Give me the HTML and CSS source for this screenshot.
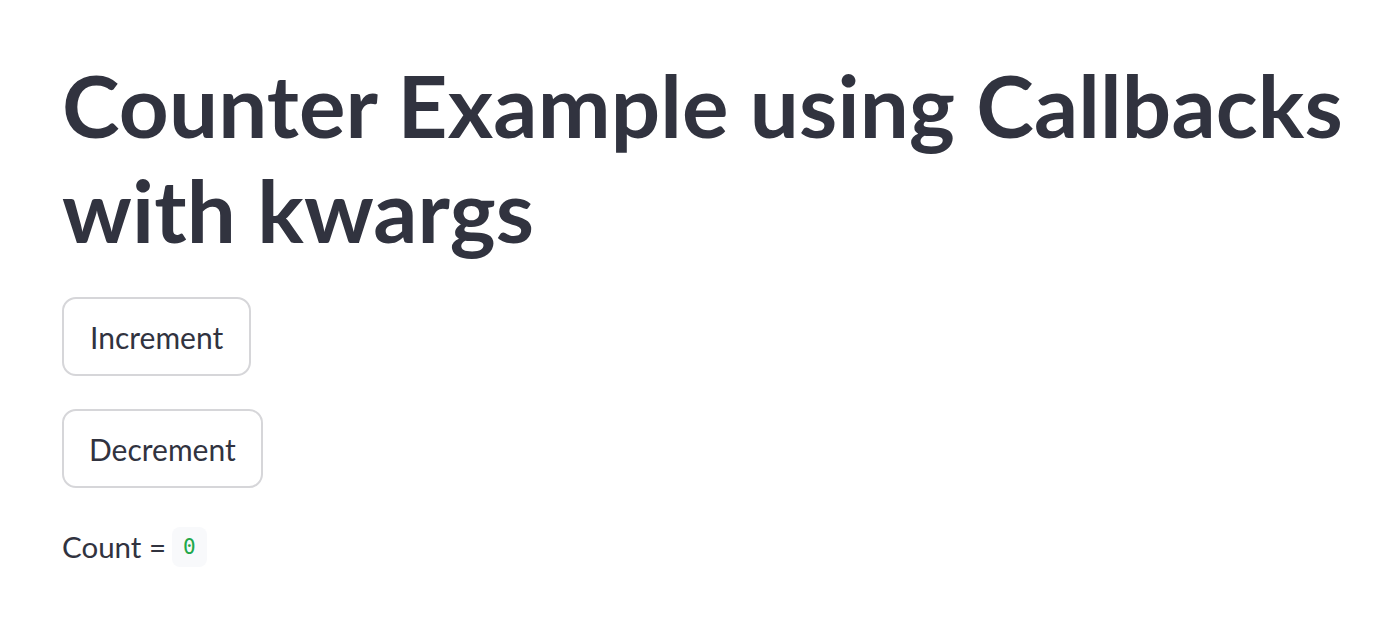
FILE: index.html
```html
<!DOCTYPE html>
<html lang="en">
<head>
<meta charset="utf-8">
<title>Counter Example</title>
<link rel="stylesheet" href="styles.css">
</head>
<body>
<main class="app">
  <h1 class="title">Counter Example using Callbacks<br>with kwargs</h1>
  <div class="stack">
    <button class="btn btn-inc" type="button">Increment</button>
    <button class="btn" type="button">Decrement</button>
    <p class="count">Count = <code class="code">0</code></p>
  </div>
</main>
</body>
</html>
```
FILE: styles.css
```css
html, body {
  margin: 0;
  padding: 0;
  background: #ffffff;
}
body {
  font-family: "Lato", "Noto Sans", sans-serif;
  color: #31333f;
}
.app {
  padding: 52px 40px 0 62px;
}
.title {
  margin: 0;
  font-family: "Lato", "Noto Sans", sans-serif;
  font-weight: 700;
  font-size: 87px;
  line-height: 105px;
  letter-spacing: 0.15px;
  color: #31333f;
  white-space: nowrap;
}
.stack {
  display: flex;
  flex-direction: column;
  align-items: flex-start;
  gap: 33px;
  margin-top: 35px;
}
.btn {
  font-family: "Lato", "Noto Sans", sans-serif;
  font-size: 30px;
  color: #31333f;
  background: #ffffff;
  border: 2px solid #d6d6d9;
  border-radius: 14px;
  height: 79px;
  padding: 0 25px;
  box-sizing: border-box;
}
.btn-inc {
  padding: 0 26px;
}
.count {
  margin: 6px 0 0;
  font-size: 29.5px;
  line-height: 40px;
  display: flex;
  align-items: center;
  gap: 6px;
}
.code {
  font-family: "DejaVu Sans Mono", monospace;
  font-size: 21px;
  color: #21a84a;
  background: #f8f9fb;
  border-radius: 8px;
  padding: 0 11px;
  height: 40px;
  display: inline-flex;
  align-items: center;
}
```
